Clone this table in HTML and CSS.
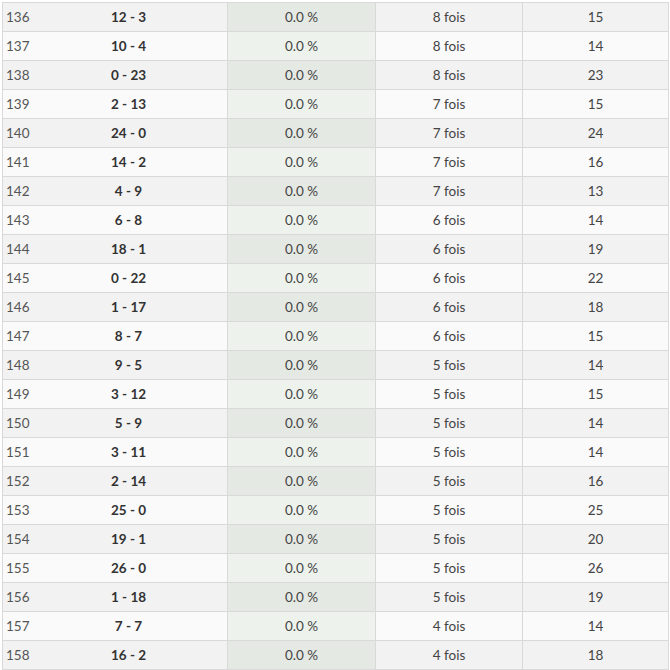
FILE: index.html
```html
<!DOCTYPE html>
<html lang="fr">
<head>
<meta charset="utf-8">
<link rel="stylesheet" href="styles.css">
</head>
<body>
<table class="stats">
<tbody>
<tr><td class="rank">136</td><td class="score">12 - 3</td><td class="pct">0.0 %</td><td class="times">8 fois</td><td class="total">15</td></tr>
<tr><td class="rank">137</td><td class="score">10 - 4</td><td class="pct">0.0 %</td><td class="times">8 fois</td><td class="total">14</td></tr>
<tr><td class="rank">138</td><td class="score">0 - 23</td><td class="pct">0.0 %</td><td class="times">8 fois</td><td class="total">23</td></tr>
<tr><td class="rank">139</td><td class="score">2 - 13</td><td class="pct">0.0 %</td><td class="times">7 fois</td><td class="total">15</td></tr>
<tr><td class="rank">140</td><td class="score">24 - 0</td><td class="pct">0.0 %</td><td class="times">7 fois</td><td class="total">24</td></tr>
<tr><td class="rank">141</td><td class="score">14 - 2</td><td class="pct">0.0 %</td><td class="times">7 fois</td><td class="total">16</td></tr>
<tr><td class="rank">142</td><td class="score">4 - 9</td><td class="pct">0.0 %</td><td class="times">7 fois</td><td class="total">13</td></tr>
<tr><td class="rank">143</td><td class="score">6 - 8</td><td class="pct">0.0 %</td><td class="times">6 fois</td><td class="total">14</td></tr>
<tr><td class="rank">144</td><td class="score">18 - 1</td><td class="pct">0.0 %</td><td class="times">6 fois</td><td class="total">19</td></tr>
<tr><td class="rank">145</td><td class="score">0 - 22</td><td class="pct">0.0 %</td><td class="times">6 fois</td><td class="total">22</td></tr>
<tr><td class="rank">146</td><td class="score">1 - 17</td><td class="pct">0.0 %</td><td class="times">6 fois</td><td class="total">18</td></tr>
<tr><td class="rank">147</td><td class="score">8 - 7</td><td class="pct">0.0 %</td><td class="times">6 fois</td><td class="total">15</td></tr>
<tr><td class="rank">148</td><td class="score">9 - 5</td><td class="pct">0.0 %</td><td class="times">5 fois</td><td class="total">14</td></tr>
<tr><td class="rank">149</td><td class="score">3 - 12</td><td class="pct">0.0 %</td><td class="times">5 fois</td><td class="total">15</td></tr>
<tr><td class="rank">150</td><td class="score">5 - 9</td><td class="pct">0.0 %</td><td class="times">5 fois</td><td class="total">14</td></tr>
<tr><td class="rank">151</td><td class="score">3 - 11</td><td class="pct">0.0 %</td><td class="times">5 fois</td><td class="total">14</td></tr>
<tr><td class="rank">152</td><td class="score">2 - 14</td><td class="pct">0.0 %</td><td class="times">5 fois</td><td class="total">16</td></tr>
<tr><td class="rank">153</td><td class="score">25 - 0</td><td class="pct">0.0 %</td><td class="times">5 fois</td><td class="total">25</td></tr>
<tr><td class="rank">154</td><td class="score">19 - 1</td><td class="pct">0.0 %</td><td class="times">5 fois</td><td class="total">20</td></tr>
<tr><td class="rank">155</td><td class="score">26 - 0</td><td class="pct">0.0 %</td><td class="times">5 fois</td><td class="total">26</td></tr>
<tr><td class="rank">156</td><td class="score">1 - 18</td><td class="pct">0.0 %</td><td class="times">5 fois</td><td class="total">19</td></tr>
<tr><td class="rank">157</td><td class="score">7 - 7</td><td class="pct">0.0 %</td><td class="times">4 fois</td><td class="total">14</td></tr>
<tr><td class="rank">158</td><td class="score">16 - 2</td><td class="pct">0.0 %</td><td class="times">4 fois</td><td class="total">18</td></tr>
</tbody>
</table>
</body>
</html>
```
FILE: styles.css
```css
html, body {
  margin: 0;
  padding: 0;
  background: #ffffff;
}
body {
  padding: 2px 0 0 2px;
  font-family: Lato, "Open Sans", sans-serif;
  font-size: 13.5px;
  color: #444;
}
.stats {
  border-collapse: collapse;
  table-layout: fixed;
  width: 667px;
  border: 1px solid #d9d9d9;
}
.stats td {
  height: 28px;
  padding: 0;
  border-top: 1px solid #d9d9d9;
  border-bottom: 1px solid #d9d9d9;
  text-align: center;
  vertical-align: middle;
  line-height: 28px;
  white-space: nowrap;
}
.stats tr:nth-child(odd) td { background: #f2f2f2; }
.stats tr:nth-child(even) td { background: #fafafa; }
.stats tr:nth-child(odd) td.pct { background: #e4e9e3; }
.stats tr:nth-child(even) td.pct { background: #edf3ec; }
.stats td.rank {
  width: 24px;
  text-align: left;
  padding-left: 3px;
  color: #555;
}
.stats td.score {
  width: 197px;
  font-weight: bold;
  color: #333;
  border-right: 1px solid #d9d9d9;
}
.stats td.pct {
  width: 147px;
  border-right: 1px solid #d9d9d9;
}
.stats td.times {
  width: 146px;
  border-right: 1px solid #d9d9d9;
}
.stats td.total {
  width: auto;
}
```
